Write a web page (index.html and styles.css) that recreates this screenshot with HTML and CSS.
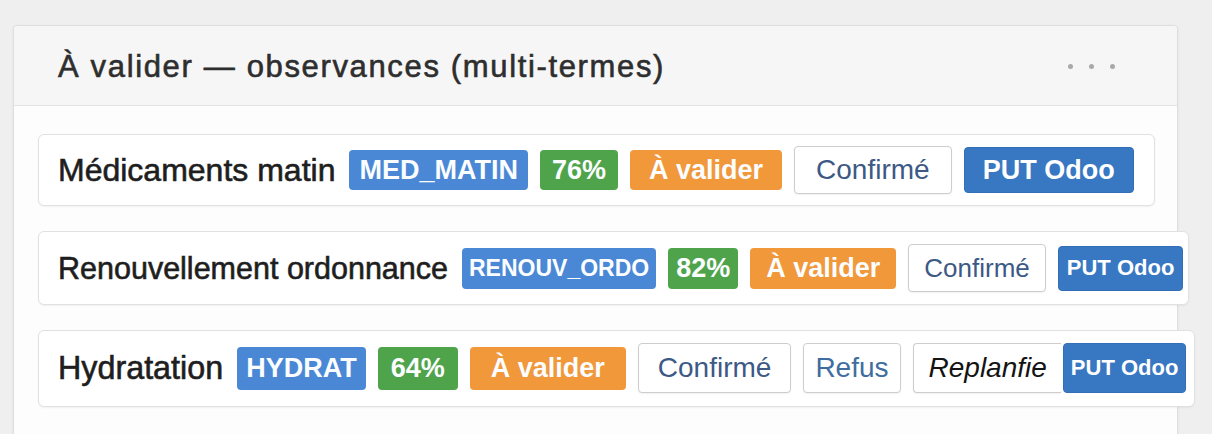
FILE: index.html
```html
<!DOCTYPE html>
<html lang="fr">
<head>
  <meta charset="UTF-8">
  <meta name="viewport" content="width=device-width, initial-scale=1.0">
  <title>Observances à valider</title>
  <link rel="stylesheet" href="styles.css">
</head>
<body>
<div class="page">
  <section class="card">
    <header class="card-head">
      <h2 class="card-title">À valider — observances (multi-termes)</h2>
      <div class="card-menu"><span></span><span></span><span></span></div>
    </header>
    <div class="card-body">
      <div class="obs-row">
        <span class="obs-label">Médicaments matin</span>
        <span class="badge badge-code">MED_MATIN</span>
        <span class="badge badge-score">76%</span>
        <span class="badge badge-state">À valider</span>
        <button class="btn btn-outline">Confirmé</button>
        <button class="btn btn-put">PUT Odoo</button>
      </div>
      <div class="obs-row obs-row-compact">
        <span class="obs-label">Renouvellement ordonnance</span>
        <span class="badge badge-code">RENOUV_ORDO</span>
        <span class="badge badge-score">82%</span>
        <span class="badge badge-state">À valider</span>
        <button class="btn btn-outline">Confirmé</button>
        <button class="btn btn-put">PUT Odoo</button>
      </div>
      <div class="obs-row obs-row-wide">
        <span class="obs-label">Hydratation</span>
        <span class="badge badge-code">HYDRAT</span>
        <span class="badge badge-score">64%</span>
        <span class="badge badge-state">À valider</span>
        <button class="btn btn-outline">Confirmé</button>
        <button class="btn btn-outline btn-refus">Refus</button>
        <button class="btn btn-outline btn-replan">Replanfie</button>
        <button class="btn btn-put">PUT Odoo</button>
      </div>
    </div>
  </section>
</div>
</body>
</html>
```

FILE: styles.css
```css
body{margin:0; background:#efefef; font-family:"Liberation Sans", Arial, sans-serif; color:#222;}
.page{padding:25px 34px 0 13px; height:409px; overflow:hidden;}

.card{
  background:#fdfdfd;
  border:1px solid #dedede;
  border-radius:4px;
  box-shadow:0 1px 3px rgba(0,0,0,0.06);
  min-height:420px;
}
.card-head{
  display:flex;
  align-items:center;
  justify-content:space-between;
  height:80px;
  padding:2px 62px 0 44px;
  box-sizing:border-box;
  background:#f6f6f6;
  border-bottom:1px solid #e3e3e3;
  border-radius:4px 4px 0 0;
}
.card-title{
  margin:0;
  font-size:31px;
  font-weight:400;
  letter-spacing:1.65px;
  color:#2e2e2e;
  -webkit-text-stroke:0.6px #2e2e2e;
}
.card-menu{display:flex; gap:16px;}
.card-menu span{width:5px; height:5px; border-radius:50%; background:#a9a9a9;}

.card-body{
  display:flex;
  flex-direction:column;
  align-items:flex-start;
  gap:25px;
  padding:28px 22px 0 24px;
}

.obs-row{
  display:flex;
  align-items:center;
  gap:12px;
  width:max-content;
  min-width:100%;
  box-sizing:border-box;
  padding:11px 20px 11px 19px;
  background:#fff;
  border:1px solid #e1e1e1;
  border-radius:6px;
  box-shadow:0 1px 2px rgba(0,0,0,0.05);
}
.obs-row-compact{padding:12px 5px 12px 19px;}
.obs-row-wide{padding:12px 8px 13px 19px;}

.obs-label{
  font-size:32px;
  color:#1e1e1e;
  margin-right:2px;
  -webkit-text-stroke:0.6px #1e1e1e;
}
.obs-row-compact .obs-label{font-size:30.5px;}
.obs-row-wide .obs-label{font-size:32.3px;}

.badge{
  display:inline-flex;
  align-items:center;
  height:40px;
  padding:0 10px;
  border-radius:4px;
  font-size:27px;
  font-weight:700;
  color:#fbfdff;
}
.badge-code{background:#4a88d6;}
.badge-score{background:#4fa44b; padding:0 12px;}
.badge-state{background:#f0983a; padding:0 19px;}

.obs-row-compact .badge{height:41px;}
.obs-row-compact .badge-code{font-size:23px; padding:0 7px;}
.obs-row-compact .badge-score{padding:0 8px;}
.obs-row-compact .badge-state{padding:0 16px;}

.obs-row-wide .badge{height:43px;}
.obs-row-wide .badge-code{padding:0 9px;}
.obs-row-wide .badge-score{padding:0 13px;}
.obs-row-wide .badge-state{padding:0 21px;}

.btn{
  height:48px;
  padding:0 21px;
  border-radius:4px;
  font-family:inherit;
  font-size:28px;
  cursor:pointer;
}
.btn-outline{
  background:#fff;
  border:1px solid #cdcdcd;
  color:#3d5985;
  box-shadow:0 1px 2px rgba(0,0,0,0.06);
}
.btn-put{
  height:46px;
  padding:0 18px;
  background:#3877c2;
  border:1px solid #336fb6;
  color:#fff;
  font-size:27px;
  font-weight:700;
}

.obs-row-compact .btn-outline{font-size:26px; padding:0 15px;}
.obs-row-compact .btn-put{height:45px; font-size:22px; padding:0 8px;}

.obs-row-wide .btn{height:50px;}
.obs-row-wide .btn-outline{padding:0 19px;}
.obs-row-wide .btn-refus{padding:0 11px; color:#3f6d9f;}
.obs-row-wide .btn-replan{
  padding:0 14px 0 15px;
  margin-right:-10px;
  border-right:none;
  border-radius:4px 0 0 4px;
  font-style:italic;
  color:#141414;
}
.obs-row-wide .btn-put{font-size:22px; padding:0 7px;}
```
